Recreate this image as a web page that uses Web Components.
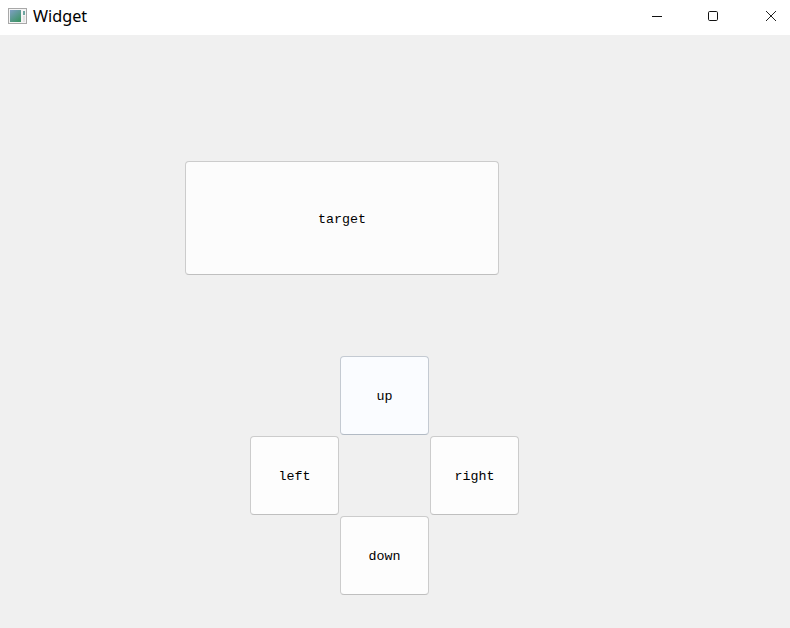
<!DOCTYPE html>
<html>
<head>
<meta charset="utf-8">
<title>Widget</title>
<style>
    html, body { margin: 0; height: 100%; background: #f0f0f0; }
    body { overflow: hidden; }
</style>
</head>
<body>
<app-window title="Widget">
    <div slot="content" style="display:contents">
        <push-button style="width:314px;height:114px;margin-left:185px;--face:#fcfcfc">target</push-button>
        <key-pad>
            <push-button slot="up" tint>up</push-button>
            <push-button slot="left">left</push-button>
            <push-button slot="right">right</push-button>
            <push-button slot="down">down</push-button>
        </key-pad>
    </div>
</app-window>
<script>
class AppWindow extends HTMLElement {
    constructor() {
        super();
        const root = this.attachShadow({mode: 'open'});
        root.innerHTML = `
        <style>
            :host { display: flex; flex-direction: column; width: 790px; height: 628px; background: #f0f0f0; }
            header {
                display: flex; align-items: center; box-sizing: border-box; height: 35px; flex: none;
                background: #fff; padding: 0 13px 3px 8px;
                font: 16.2px "Noto Sans", "Open Sans", sans-serif; color: #000;
            }
            .icon { margin-right: 6px; display: block; }
            .title { flex: 1; }
            .controls { display: flex; gap: 44px; }
            .controls svg { display: block; }
            main { display: flex; flex-direction: column; padding-top: 126px; gap: 81px; }
        </style>
        <header>
            <svg class="icon" width="19" height="16" viewBox="0 0 19 16">
                <defs><linearGradient id="g" x1="0" y1="0" x2="0.7" y2="1">
                    <stop offset="0" stop-color="#7f9fc4"/><stop offset="1" stop-color="#3f9468"/>
                </linearGradient></defs>
                <rect x=".5" y=".5" width="18" height="15" fill="#f4f4f4" stroke="#a8a8a8"/>
                <rect x="2" y="2" width="11" height="12" fill="url(#g)"/>
                <rect x="15" y="3" width="2" height="4" fill="#6fa5a0"/>
                <rect x="15" y="8" width="2" height="6" fill="#e2e2e2"/>
            </svg>
            <span class="title">${this.getAttribute("title")}</span>
            <div class="controls">
                <svg width="12" height="12" viewBox="0 0 12 12"><path d="M1 6.5H11" stroke="#111" fill="none"/></svg>
                <svg width="12" height="12" viewBox="0 0 12 12"><rect x="1.5" y="1.5" width="9" height="9" rx="1.2" stroke="#111" fill="none"/></svg>
                <svg width="12" height="12" viewBox="0 0 12 12" style="margin-left:2px"><path d="M1 1L11 11M11 1L1 11" stroke="#222" fill="none"/></svg>
            </div>
        </header>
        <main><slot name="content"></slot></main>
        `;
    }
}

class PushButton extends HTMLElement {
    constructor() {
        super();
        const root = this.attachShadow({mode: 'open'});
        root.innerHTML = `
        <style>
            :host {
                display: flex; align-items: center; justify-content: center; box-sizing: border-box;
                padding: 2px 0 0 0;
                background: var(--face, #fdfdfd); border: 1px solid #cccccc; border-bottom-color: #bfbfbf; border-radius: 4px;
                font: 13.33px "Liberation Mono", monospace; color: #000;
            }
            :host([tint]) { background: #fafcff; border-color: #c4cad2; border-bottom-color: #b2bac4; }
        </style>
        <slot></slot>
        `;
    }
}

class KeyPad extends HTMLElement {
    constructor() {
        super();
        const root = this.attachShadow({mode: 'open'});
        root.innerHTML = `
        <style>
            :host {
                display: grid; grid-template-columns: repeat(3, 89px); grid-template-rows: repeat(3, 79px);
                gap: 1px; margin-left: 250px;
            }
            ::slotted([slot=up]) { grid-area: 1 / 2; }
            ::slotted([slot=left]) { grid-area: 2 / 1; }
            ::slotted([slot=right]) { grid-area: 2 / 3; }
            ::slotted([slot=down]) { grid-area: 3 / 2; }
        </style>
        <slot name="up"></slot><slot name="left"></slot><slot name="right"></slot><slot name="down"></slot>
        `;
    }
}

customElements.define("app-window", AppWindow);
customElements.define("push-button", PushButton);
customElements.define("key-pad", KeyPad);
</script>
</body>
</html>
